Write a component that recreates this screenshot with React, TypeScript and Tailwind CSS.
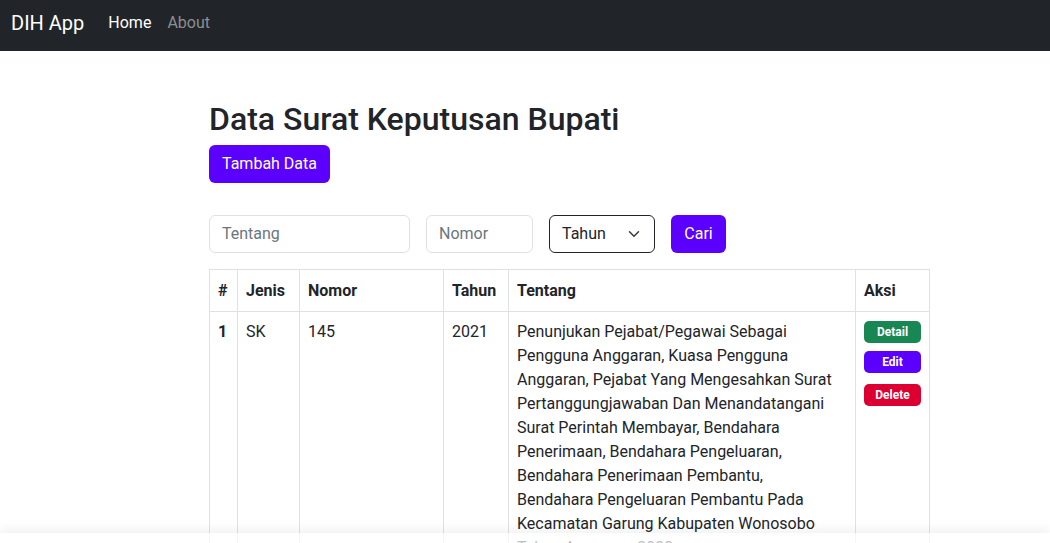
import React from "react";

const lines = [
  "Penunjukan Pejabat/Pegawai Sebagai",
  "Pengguna Anggaran, Kuasa Pengguna",
  "Anggaran, Pejabat Yang Mengesahkan Surat",
  "Pertanggungjawaban Dan Menandatangani",
  "Surat Perintah Membayar, Bendahara",
  "Penerimaan, Bendahara Pengeluaran,",
  "Bendahara Penerimaan Pembantu,",
  "Bendahara Pengeluaran Pembantu Pada",
  "Kecamatan Garung Kabupaten Wonosobo",
  "Tahun Anggaran 2022",
];

export default function App() {
  return (
    <div className="min-h-screen bg-white text-[#212529] font-['Roboto','Liberation_Sans',sans-serif] text-[16px] overflow-hidden h-[543px] relative">
      <nav className="h-[51px] bg-[#212529] flex items-start pt-[9px] pl-[11px]">
        <span className="text-white text-[20px] leading-[28px] mr-[24px]">DIH App</span>
        <span className="text-white text-[16px] leading-[28px] mr-[16px]">Home</span>
        <span className="text-[#8c8e91] text-[16px] leading-[28px]">About</span>
      </nav>
      <div className="ml-[209px] w-[720px] pt-[49px]">
        <h2 className="text-[32px] font-medium leading-[38px] mb-[7px]">Data Surat Keputusan Bupati</h2>
        <button className="h-[38px] px-[13px] bg-[#5b00ff] text-white rounded-[6px] text-[16px]">Tambah Data</button>
        <div className="flex mt-[32px] h-[38px]">
          <div className="w-[201px] h-[38px] border border-[#dee2e6] rounded-[6px] flex items-center px-[12px] text-[#6c757d]">Tentang</div>
          <div className="ml-[16px] w-[107px] h-[38px] border border-[#dee2e6] rounded-[6px] flex items-center px-[12px] text-[#6c757d]">Nomor</div>
          <div className="ml-[16px] w-[106px] h-[38px] border border-[#212529] rounded-[6px] flex items-center justify-between pl-[12px] pr-[14px]">
            <span>Tahun</span>
            <svg width="12" height="12" viewBox="0 0 16 16" fill="none" stroke="#343a40" strokeWidth="2" strokeLinecap="round" strokeLinejoin="round"><path d="M2 5l6 6 6-6" /></svg>
          </div>
          <button className="ml-[16px] w-[55px] h-[38px] bg-[#5b00ff] text-white rounded-[6px]">Cari</button>
        </div>
        <table className="mt-[16px] w-[720px] border-collapse table-fixed">
          <colgroup>
            <col className="w-[28px]" />
            <col className="w-[62px]" />
            <col className="w-[144px]" />
            <col className="w-[65px]" />
            <col className="w-[347px]" />
            <col className="w-[74px]" />
          </colgroup>
          <thead>
            <tr className="h-[42px]">
              {["#", "Jenis", "Nomor", "Tahun", "Tentang", "Aksi"].map((h) => (
                <th key={h} className="border border-[#dee2e6] px-[8px] text-left font-bold align-middle">{h}</th>
              ))}
            </tr>
          </thead>
          <tbody>
            <tr>
              <td className="border border-[#dee2e6] px-[8px] pt-[8px] align-top font-bold leading-[24px]">1</td>
              <td className="border border-[#dee2e6] px-[8px] pt-[8px] align-top leading-[24px]">SK</td>
              <td className="border border-[#dee2e6] px-[8px] pt-[8px] align-top leading-[24px]">145</td>
              <td className="border border-[#dee2e6] px-[8px] pt-[8px] align-top leading-[24px]">2021</td>
              <td className="border border-[#dee2e6] px-[8px] pt-[8px] pb-[8px] align-top leading-[24px]">
                {lines.map((l) => (
                  <div key={l} className="whitespace-nowrap">{l}</div>
                ))}
              </td>
              <td className="border border-[#dee2e6] px-[8px] pt-[9px] align-top">
                <div className="flex flex-col items-start">
                  <span className="w-[57px] h-[22px] rounded-[5px] bg-[#198754] text-white text-[12px] font-bold flex items-center justify-center">Detail</span>
                  <span className="mt-[8px] w-[57px] h-[22px] rounded-[5px] bg-[#5b00ff] text-white text-[12px] font-bold flex items-center justify-center">Edit</span>
                  <span className="mt-[11px] w-[57px] h-[22px] rounded-[5px] bg-[#dc0032] text-white text-[12px] font-bold flex items-center justify-center">Delete</span>
                </div>
              </td>
            </tr>
          </tbody>
        </table>
      </div>
      <div className="absolute bottom-0 left-0 right-0 h-[10px] bg-white/70 shadow-[0_-4px_10px_rgba(0,0,0,0.06)]" />
    </div>
  );
}
